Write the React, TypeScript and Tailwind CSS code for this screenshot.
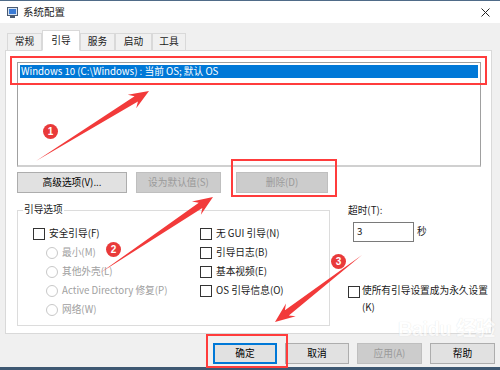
import React from 'react';

const FONT = '"Noto Sans CJK SC", "Noto Sans", sans-serif';

type Pt = [number, number];

// tapered annotation arrow: thin tail widening towards the head
function arrowPoints(t: Pt, h: Pt, headLen = 20, headHalf = 8, shaftHalf = 3.2) {
  const dx = h[0] - t[0];
  const dy = h[1] - t[1];
  const len = Math.hypot(dx, dy);
  const ux = dx / len;
  const uy = dy / len;
  const nx = -uy;
  const ny = ux;
  const bx = h[0] - ux * headLen;
  const by = h[1] - uy * headLen;
  const bx2 = h[0] - ux * (headLen - 5);
  const by2 = h[1] - uy * (headLen - 5);
  const pts: Pt[] = [
    [t[0], t[1]],
    [bx2 + nx * shaftHalf, by2 + ny * shaftHalf],
    [bx + nx * headHalf, by + ny * headHalf],
    [h[0], h[1]],
    [bx - nx * headHalf, by - ny * headHalf],
    [bx2 - nx * shaftHalf, by2 - ny * shaftHalf],
  ];
  return pts.map((p) => p.join(',')).join(' ');
}

const Checkbox: React.FC<{ label: string }> = ({ label }) => (
  <div className="flex items-center gap-[4px] h-[19px]">
    <span className="w-[12px] h-[12px] border border-[#333] bg-white shrink-0" />
    <span>{label}</span>
  </div>
);

const Radio: React.FC<{ label: string }> = ({ label }) => (
  <div className="flex items-center gap-[4px] h-[19px] text-[#a0a0a0]">
    <span className="w-[12px] h-[12px] rounded-full border border-[#c8c8c8] bg-white shrink-0" />
    <span>{label}</span>
  </div>
);

const Btn: React.FC<{ label: string; w: string; disabled?: boolean; focused?: boolean }> = ({ label, w, disabled, focused }) => (
  <div
    className={`${w} h-[21px] flex items-center justify-center border ${
      disabled
        ? 'bg-[#cccccc] border-[#bfbfbf] text-[#9a9a9a]'
        : focused
        ? 'bg-[#e1e1e1] border-[#0078d7] ring-1 ring-inset ring-[#0078d7] text-black'
        : 'bg-[#e1e1e1] border-[#adadad] text-black'
    }`}
  >
    {label}
  </div>
);

const Tab: React.FC<{ label: string; w: string; active?: boolean }> = ({ label, w, active }) => (
  <div
    className={`${w} flex items-center justify-center border border-[#d9d9d9] ${
      active ? 'h-[21px] bg-white border-b-white -mb-px z-10' : 'h-[17px] bg-[#f0f0f0] border-b-0'
    }`}
  >
    {label}
  </div>
);

export default function App() {
  return (
    <div className="relative w-[500px] h-[370px] overflow-hidden bg-[#f0f0f0] text-[9.7px] leading-none text-[#1a1a1a]" style={{ fontFamily: FONT }}>
      <div className="h-px bg-[#4f6b88]" />
      {/* title bar */}
      <div className="h-[22px] bg-white flex items-center pl-[7px] pr-[10px]">
        <svg width="11" height="11" viewBox="0 0 11 11" className="mr-[5px]">
          <rect x="0.5" y="0.5" width="10" height="8" fill="#d7e4f2" stroke="#4a5a70" />
          <rect x="2" y="2" width="7" height="5" fill="#3a7bd5" />
          <rect x="3" y="9" width="5" height="2" fill="#4a5a70" />
        </svg>
        <span className="text-[10.5px]">系统配置</span>
        <svg width="9" height="9" viewBox="0 0 9 9" className="ml-auto">
          <path d="M0.5 0.5 L8.5 8.5 M8.5 0.5 L0.5 8.5" stroke="#222" strokeWidth="1" />
        </svg>
      </div>

      {/* tabs */}
      <div className="pl-[7px] pt-[7px] flex items-end">
        <Tab label="常规" w="w-[35px]" />
        <Tab label="引导" w="w-[38px]" active />
        <Tab label="服务" w="w-[35px]" />
        <Tab label="启动" w="w-[37px]" />
        <Tab label="工具" w="w-[34px]" />
      </div>

      {/* panel */}
      <div className="ml-[5px] w-[487px] h-[284px] bg-white border border-[#d9d9d9] pl-[11px] pr-[10px] pt-[11px]">
        <div className="h-[105px] border border-[#a0a0a0] border-b-2 border-b-[#d0d0d0] p-[2px]">
          <div className="h-[13px] bg-[#0078d7] text-white flex items-center pl-[1px]">
            Windows 10 (C:\Windows) : 当前 OS; 默认 OS
          </div>
        </div>

        <div className="flex gap-[9px] mt-[5px]">
          <Btn label="高级选项(V)..." w="w-[110px]" />
          <Btn label="设为默认值(S)" w="w-[85px]" disabled />
          <Btn label="删除(D)" w="w-[92px] ml-[6px]" disabled />
        </div>

        <div className="flex mt-[17px]">
          <div className="relative shrink-0 w-[313px] h-[116px] border border-[#dcdcdc]">
            <span className="absolute -top-[6px] left-[5px] bg-white px-[1px]">引导选项</span>
            <div className="flex pt-[13px] pl-[15px]">
              <div className="w-[167px]">
                <Checkbox label="安全引导(F)" />
                <div className="pl-[13px]">
                  <Radio label="最小(M)" />
                  <Radio label="其他外壳(L)" />
                  <Radio label="Active Directory 修复(P)" />
                  <Radio label="网络(W)" />
                </div>
              </div>
              <div>
                <Checkbox label="无 GUI 引导(N)" />
                <Checkbox label="引导日志(B)" />
                <Checkbox label="基本视频(E)" />
                <Checkbox label="OS 引导信息(O)" />
              </div>
            </div>
          </div>

          <div className="ml-[18px] shrink-0 w-[140px] flex flex-col">
            <span className="-mt-[4px]">超时(T):</span>
            <div className="flex items-center mt-[6px] ml-[5px]">
              <div className="w-[61px] h-[20px] border border-[#7a7a7a] flex items-center pl-[3px]">3</div>
              <span className="ml-[3px]">秒</span>
            </div>
            <div className="flex mt-[43px]">
              <span className="w-[12px] h-[12px] border border-[#333] bg-white shrink-0 mt-[1px]" />
              <span className="ml-[2px] w-[126px] leading-[17px] -mt-[3px]">使所有引导设置成为永久设置 (K)</span>
            </div>
          </div>
        </div>
      </div>

      {/* dialog buttons */}
      <div className="flex justify-end gap-[8px] pr-[5px] mt-[9px]">
        <Btn label="确定" w="w-[64px]" focused />
        <Btn label="取消" w="w-[64px]" />
        <Btn label="应用(A)" w="w-[65px]" disabled />
        <Btn label="帮助" w="w-[65px]" />
      </div>
      <div className="absolute left-0 right-0 bottom-0 h-[3px] bg-[#3e5872]" />

      {/* watermark */}
      <div className="absolute left-[398px] top-[318px] text-white opacity-60 pointer-events-none" style={{ textShadow: '0 0 1px #c8c8c8' }}>
        <div className="text-[20px] font-bold tracking-tight" style={{ fontFamily: '"Liberation Sans", sans-serif' }}>
          Baidu <span style={{ fontFamily: FONT }}>经验</span>
        </div>
      </div>

      {/* annotations */}
      <div className="absolute left-[10px] top-[56px] w-[477px] h-[29px] border-2 border-[#ff3c3c] pointer-events-none" />
      <div className="absolute left-[231px] top-[159px] w-[106px] h-[38px] border-2 border-[#ff3c3c] pointer-events-none" />
      <div className="absolute left-[206px] top-[334px] w-[82px] h-[34px] border-2 border-[#ff3c3c] pointer-events-none" />

      <svg className="absolute inset-0 pointer-events-none" width="500" height="370">
        <polygon points={arrowPoints([36, 161], [149, 91])} fill="#f23a3a" />
        <polygon points={arrowPoints([100, 273], [213, 197])} fill="#f23a3a" />
        <polygon points={arrowPoints([362, 255], [275, 322])} fill="#f23a3a" />
      </svg>

      {[
        { n: '1', cls: 'left-[43px] top-[124px]' },
        { n: '2', cls: 'left-[106px] top-[242px]' },
        { n: '3', cls: 'left-[331px] top-[254px]' },
      ].map((b) => (
        <div
          key={b.n}
          className={`absolute ${b.cls} w-[15px] h-[15px] rounded-full bg-[#e93a3a] text-white text-[10px] font-bold flex items-center justify-center`}
          style={{ fontFamily: '"Liberation Sans", sans-serif' }}
        >
          {b.n}
        </div>
      ))}
    </div>
  );
}
